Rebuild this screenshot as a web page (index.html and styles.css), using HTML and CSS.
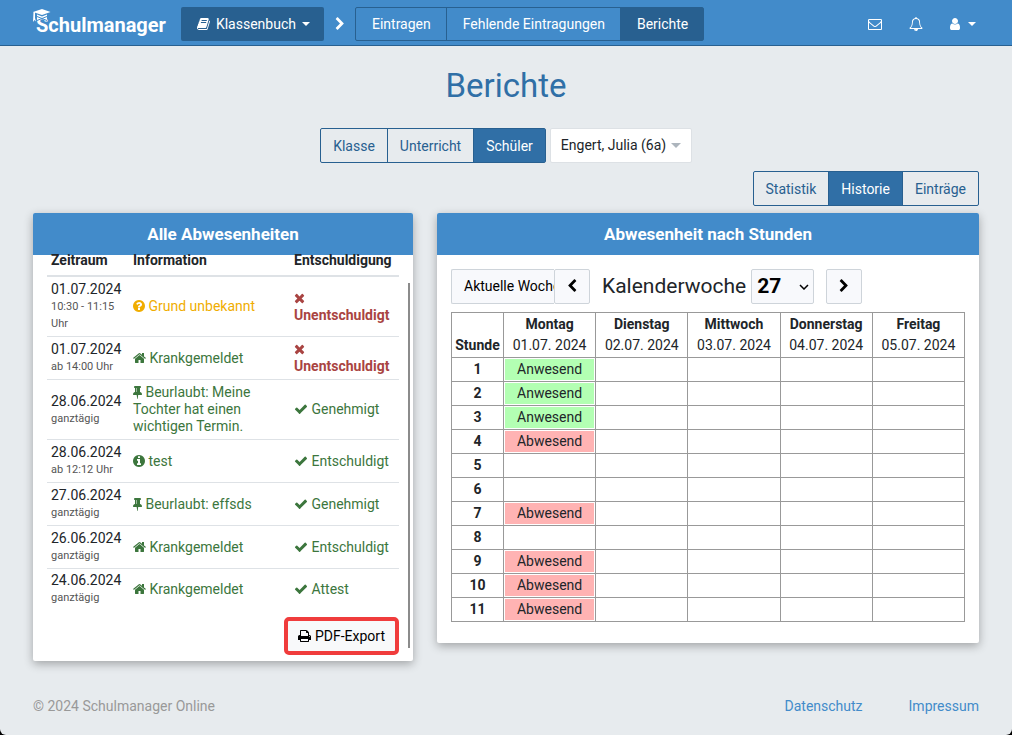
FILE: index.html
```html
<!DOCTYPE html>
<html lang="de">
<head>
<meta charset="utf-8">
<meta name="viewport" content="width=device-width, initial-scale=1">
<title>Schulmanager – Berichte</title>
<link rel="stylesheet" href="styles.css">
</head>
<body>
<svg class="sprite" aria-hidden="true">
  <symbol id="i-times" viewBox="192 0 1408 1792"><path d="M1490 1322q0 40-28 68l-136 136q-28 28-68 28t-68-28l-294-294-294 294q-28 28-68 28t-68-28l-136-136q-28-28-28-68t28-68l294-294-294-294q-28-28-28-68t28-68l136-136q28-28 68-28t68 28l294 294 294-294q28-28 68-28t68 28l136 136q28 28 28 68t-28 68l-294 294 294 294q28 28 28 68z"/></symbol>
  <symbol id="i-check" viewBox="0 0 1792 1792"><path d="M1671 566q0 40-28 68l-724 724-136 136q-28 28-68 28t-68-28l-136-136-362-362q-28-28-28-68t28-68l136-136q28-28 68-28t68 28l294 295 656-657q28-28 68-28t68 28l136 136q28 28 28 68z"/></symbol>
  <symbol id="i-home" viewBox="64 0 1664 1792"><path d="M1472 992v480q0 26-19 45t-45 19h-384v-384h-256v384h-384q-26 0-45-19t-19-45v-480q0-1 .5-3t.5-3l575-474 575 474q1 2 1 6zm223-69l-62 74q-8 9-21 11h-3q-13 0-21-7l-692-577-692 577q-12 8-24 7-13-2-21-11l-62-74q-8-10-7-23.5t11-21.5l719-599q32-26 76-26t76 26l244 204v-195q0-14 9-23t23-9h192q14 0 23 9t9 23v408l219 182q10 8 11 21.5t-7 23.5z"/></symbol>
  <symbol id="i-question" viewBox="128 0 1536 1792"><path d="M1024 1376v-192q0-14-9-23t-23-9h-192q-14 0-23 9t-9 23v192q0 14 9 23t23 9h192q14 0 23-9t9-23zm256-672q0-88-55.500-163t-138.500-116-170-41q-243 0-371 213-15 24 8 42l132 100q7 6 19 6 16 0 25-12 53-68 86-92 34-24 86-24 48 0 85.500 26t37.500 59q0 38-20 61t-68 45q-63 28-115.500 86.500t-52.500 125.500v36q0 14 9 23t23 9h192q14 0 23-9t9-23q0-19 21.500-49.500t54.500-49.500q32-18 49-28.500t46-35 44.500-48 28-60.500 12.500-81zm384 192q0 209-103 385.500t-279.500 279.500-385.500 103-385.500-103-279.500-279.500-103-385.500 103-385.500 279.500-279.500 385.500-103 385.500 103 279.500 279.500 103 385.500z"/></symbol>
  <symbol id="i-info" viewBox="128 0 1536 1792"><path d="M1152 1376v-160q0-14-9-23t-23-9h-96v-512q0-14-9-23t-23-9h-320q-14 0-23 9t-9 23v160q0 14 9 23t23 9h96v320h-96q-14 0-23 9t-9 23v160q0 14 9 23t23 9h448q14 0 23-9t9-23zm-128-896v-160q0-14-9-23t-23-9h-192q-14 0-23 9t-9 23v160q0 14 9 23t23 9h192q14 0 23-9t9-23zm640 416q0 209-103 385.500t-279.500 279.500-385.500 103-385.500-103-279.500-279.500-103-385.500 103-385.500 279.500-279.500 385.500-103 385.500 103 279.500 279.500 103 385.500z"/></symbol>
  <symbol id="i-pin" viewBox="320 0 1152 1792"><path d="M800 864v-448q0-14-9-23t-23-9-23 9-9 23v448q0 14 9 23t23 9 23-9 9-23zm672 352q0 26-19 45t-45 19h-429l-51 483q-2 12-10.500 20.500t-20.500 8.500h-1q-27 0-32-27l-76-485h-404q-26 0-45-19t-19-45q0-123 78.500-221.500t177.500-98.500v-512q-52 0-90-38t-38-90 38-90 90-38h640q52 0 90 38t38 90-38 90-90 38v512q99 0 177.500 98.500t78.500 221.500z"/></symbol>
  <symbol id="i-print" viewBox="64 0 1664 1792"><path d="M448 1536h896v-256h-896v256zm0-640h896v-384h-160q-40 0-68-28t-28-68v-160h-640v640zm1152 64q0-26-19-45t-45-19-45 19-19 45 19 45 45 19 45-19 19-45zm128 0v416q0 13-9.500 22.500t-22.500 9.500h-224v160q0 40-28 68t-68 28h-960q-40 0-68-28t-28-68v-160h-224q-13 0-22.500-9.500t-9.500-22.500v-416q0-79 56.500-135.500t135.500-56.500h64v-544q0-40 28-68t68-28h672q40 0 88 20t76 48l152 152q28 28 48 76t20 88v256h64q79 0 135.500 56.500t56.500 135.500z"/></symbol>
  <symbol id="i-book" viewBox="64 0 1664 1792"><path d="M1703 478q40 57 18 129l-275 906q-19 64-76.500 107.500t-122.500 43.500h-923q-77 0-148.500-53.500t-99.500-131.500q-24-67-2-127 0-4 3-27t4-37q1-8-3-21.500t-3-19.500q2-11 8-21t16.500-23.500 16.500-23.500q23-38 45-91.500t30-91.500q3-10 .5-30t-.5-28q3-11 17-28t17-23q21-36 42-92t25-90q1-9-2.500-32t.5-28q4-13 22-30.500t22-22.500q19-26 42.500-84.500t27.500-96.500q1-8-3-25.500t-2-26.500q2-8 9-18t18-23 17-21q8-12 16.500-30.500t15-35 16-36 19.500-32 26.500-23.500 36-11.500 47.500 5.500l-1 3q38-9 51-9h761q74 0 114 56t18 130l-274 906q-36 119-71.500 153.500t-128.500 34.500h-869q-27 0-38 15-11 16-1 43 24 70 144 70h923q29 0 56-15.500t35-41.500l300-987q7-22 5-57 38 15 59 43zm-1064 2q-4 13 2 22.500t20 9.500h608q13 0 25.500-9.500t16.500-22.500l21-64q4-13-2-22.500t-20-9.500h-608q-13 0-25.500 9.500t-16.500 22.500zm-83 256q-4 13 2 22.500t20 9.500h608q13 0 25.500-9.500t16.500-22.500l21-64q4-13-2-22.500t-20-9.500h-608q-13 0-25.500 9.500t-16.500 22.500z"/></symbol>
  <symbol id="i-mail" viewBox="0 0 1792 1792"><path d="M1664 1504v-768q-32 36-69 66-268 206-426 338-51 43-83 67t-86.500 48.500-102.500 24.500h-2q-48 0-102.500-24.500t-86.500-48.500-83-67q-158-132-426-338-37-30-69-66v768q0 13 9.500 22.500t22.500 9.500h1472q13 0 22.500-9.500t9.500-22.500zm0-1051v-24.500l-.5-13-3-12.500-5.500-9-9-7.500-14-2.500h-1472q-13 0-22.500 9.500t-9.500 22.500q0 168 147 284 193 152 401 317 6 5 35 29.500t46 37.500 44.500 31.500 50.500 27.500 43 9h2q20 0 43-9t50.500-27.500 44.500-31.500 46-37.500 35-29.500q208-165 401-317 54-43 100.500-115.500t46.500-131.500zm128-37v1088q0 66-47 113t-113 47h-1472q-66 0-113-47t-47-113v-1088q0-66 47-113t113-47h1472q66 0 113 47t47 113z"/></symbol>
  <symbol id="i-bell" viewBox="0 0 1792 1792"><path d="M912 1696q0-16-16-16-59 0-101.500-42.500t-42.500-101.500q0-16-16-16t-16 16q0 73 51.500 124.500t124.500 51.500q16 0 16-16zm-666-288h1300q-266-300-266-832 0-51-24-105t-69-103-121.500-80.500-169.500-31.500-169.500 31.500-121.500 80.500-69 103-24 105q0 532-266 832zm1482 0q0 52-38 90t-90 38h-448q0 106-75 181t-181 75-181-75-75-181h-448q-52 0-90-38t-38-90q50-42 91-88t85-119.500 74.500-158.500 50-206 19.500-260q0-152 117-282.500t307-158.500q-8-19-8-39 0-40 28-68t68-28 68 28 28 68q0 20-8 39 190 28 307 158.500t117 282.500q0 139 19.500 260t50 206 74.500 158.500 85 119.500 91 88z"/></symbol>
  <symbol id="i-user" viewBox="256 0 1280 1792"><path d="M1536 1399q0 109-62.500 187t-150.500 78h-854q-88 0-150.500-78t-62.500-187q0-85 8.500-160.500t31.500-152 58.500-131 94-89 134.500-34.500q131 128 313 128t313-128q76 0 134.500 34.500t94 89 58.500 131 31.500 152 8.500 160.500zm-256-887q0 159-112.500 271.500t-271.500 112.500-271.500-112.500-112.500-271.500 112.500-271.500 271.500-112.500 271.500 112.500 112.500 271.500z"/></symbol>
  <symbol id="i-next" viewBox="256 0 1280 1792"><path d="M1363 877l-742 742q-19 19-45 19t-45-19l-166-166q-19-19-19-45t19-45l531-531-531-531q-19-19-19-45t19-45l166-166q19-19 45-19t45 19l742 742q19 19 19 45t-19 45z"/></symbol>
  <symbol id="i-prev" viewBox="256 0 1280 1792"><path transform="translate(1792 0) scale(-1 1)" d="M1363 877l-742 742q-19 19-45 19t-45-19l-166-166q-19-19-19-45t19-45l531-531-531-531q-19-19-19-45t19-45l166-166q19-19 45-19t45 19l742 742q19 19 19 45t-19 45z"/></symbol>
</svg>

<header class="topbar">
  <a class="logo" href="#">Schulmanager
    <svg class="logo-cap" viewBox="0 0 18 16" aria-hidden="true">
      <path class="cap-gap" d="M2 5H16V9L14 10H4L2 11Z"/>
      <path d="M0 3L9 0L17.500 3L9 6Z"/>
      <path d="M4 5.500L9 7.500L14 5.500V11.500L9 9.500L4 11.500Z"/>
      <path class="cap-line" d="M4 7.500L14 11.500M14 7.500L4 11.500"/>
      <path d="M.5 3H2V9L3 12.500L1.500 11L0 13Z"/>
    </svg>
  </a>
  <button class="module" type="button"><svg class="icon w13"><use href="#i-book"/></svg>Klassenbuch<span class="caret"></span></button>
  <svg class="icon w10 crumb" aria-hidden="true"><use href="#i-next"/></svg>
  <nav class="group nav-group">
    <a href="#">Eintragen</a><a href="#">Fehlende Eintragungen</a><a class="active" href="#" aria-current="page">Berichte</a>
  </nav>
  <div class="tools">
    <a href="#" aria-label="Nachrichten"><svg class="icon w14"><use href="#i-mail"/></svg></a>
    <a href="#" aria-label="Benachrichtigungen"><svg class="icon w14"><use href="#i-bell"/></svg></a>
    <a href="#" aria-label="Benutzer"><svg class="icon w10"><use href="#i-user"/></svg><span class="caret"></span></a>
  </div>
</header>

<main class="page">
  <h1>Berichte</h1>
  <div class="filters">
    <div class="group tabs">
      <a href="#">Klasse</a><a href="#">Unterricht</a><a class="active" href="#">Schüler</a>
    </div>
    <label class="student">
      <select aria-label="Schüler auswählen"><option>Engert, Julia (6a)</option></select>
      <span class="caret student-caret"></span>
    </label>
  </div>
  <div class="views">
    <div class="group tabs">
      <a href="#">Statistik</a><a class="active" href="#">Historie</a><a href="#">Einträge</a>
    </div>
  </div>

  <div class="panels">
    <section class="panel">
      <h2>Alle Abwesenheiten</h2>
      <div class="absences">
        <table class="list">
          <colgroup><col class="c-time"><col><col class="c-state"></colgroup>
          <thead><tr><th>Zeitraum</th><th>Information</th><th>Entschuldigung</th></tr></thead>
          <tbody>
            <tr><td>01.07.2024<small>10:30 - 11:15 Uhr</small></td><td class="warn"><svg class="icon w12"><use href="#i-question"/></svg> Grund unbekannt</td><td class="bad"><svg class="icon w11"><use href="#i-times"/></svg> Unentschuldigt</td></tr>
            <tr><td>01.07.2024<small>ab 14:00 Uhr</small></td><td class="good"><svg class="icon w13"><use href="#i-home"/></svg> Krankgemeldet</td><td class="bad"><svg class="icon w11"><use href="#i-times"/></svg> Unentschuldigt</td></tr>
            <tr><td>28.06.2024<small>ganztägig</small></td><td class="good"><svg class="icon w9"><use href="#i-pin"/></svg> Beurlaubt: Meine Tochter hat einen wichtigen Termin.</td><td class="good"><svg class="icon w14"><use href="#i-check"/></svg> Genehmigt</td></tr>
            <tr><td>28.06.2024<small>ab 12:12 Uhr</small></td><td class="good"><svg class="icon w12"><use href="#i-info"/></svg> test</td><td class="good"><svg class="icon w14"><use href="#i-check"/></svg> Entschuldigt</td></tr>
            <tr><td>27.06.2024<small>ganztägig</small></td><td class="good"><svg class="icon w9"><use href="#i-pin"/></svg> Beurlaubt: effsds</td><td class="good"><svg class="icon w14"><use href="#i-check"/></svg> Genehmigt</td></tr>
            <tr><td>26.06.2024<small>ganztägig</small></td><td class="good"><svg class="icon w13"><use href="#i-home"/></svg> Krankgemeldet</td><td class="good"><svg class="icon w14"><use href="#i-check"/></svg> Entschuldigt</td></tr>
            <tr><td>24.06.2024<small>ganztägig</small></td><td class="good"><svg class="icon w13"><use href="#i-home"/></svg> Krankgemeldet</td><td class="good"><svg class="icon w14"><use href="#i-check"/></svg> Attest</td></tr>
          </tbody>
        </table>
        <div class="export"><button type="button"><svg class="icon w13"><use href="#i-print"/></svg> PDF-Export</button></div>
        <span class="scroll-thumb"></span>
      </div>
    </section>

    <section class="panel">
      <h2>Abwesenheit nach Stunden</h2>
      <div class="week">
        <div class="week-bar">
          <div class="week-nav">
            <button class="btn current" type="button">Aktuelle Woche</button><button class="btn step" type="button" aria-label="Vorherige Woche"><svg class="icon w10"><use href="#i-prev"/></svg></button>
          </div>
          <label class="week-label" for="kw">Kalenderwoche</label>
          <span class="week-pick">
            <select id="kw"><option>27</option></select>
            <svg viewBox="0 0 10 6" aria-hidden="true"><path d="M1 1L5 5L9 1"/></svg>
          </span>
          <button class="btn step" type="button" aria-label="Nächste Woche"><svg class="icon w10"><use href="#i-next"/></svg></button>
        </div>
        <table class="hours">
          <colgroup><col class="c-hour"><col><col><col><col><col></colgroup>
          <thead><tr><th>Stunde</th><th>Montag<span>01.07. 2024</span></th><th>Dienstag<span>02.07. 2024</span></th><th>Mittwoch<span>03.07. 2024</span></th><th>Donnerstag<span>04.07. 2024</span></th><th>Freitag<span>05.07. 2024</span></th></tr></thead>
          <tbody>
            <tr><th>1</th><td><span class="present">Anwesend</span></td><td></td><td></td><td></td><td></td></tr>
            <tr><th>2</th><td><span class="present">Anwesend</span></td><td></td><td></td><td></td><td></td></tr>
            <tr><th>3</th><td><span class="present">Anwesend</span></td><td></td><td></td><td></td><td></td></tr>
            <tr><th>4</th><td><span class="absent">Abwesend</span></td><td></td><td></td><td></td><td></td></tr>
            <tr><th>5</th><td></td><td></td><td></td><td></td><td></td></tr>
            <tr><th>6</th><td></td><td></td><td></td><td></td><td></td></tr>
            <tr><th>7</th><td><span class="absent">Abwesend</span></td><td></td><td></td><td></td><td></td></tr>
            <tr><th>8</th><td></td><td></td><td></td><td></td><td></td></tr>
            <tr><th>9</th><td><span class="absent">Abwesend</span></td><td></td><td></td><td></td><td></td></tr>
            <tr><th>10</th><td><span class="absent">Abwesend</span></td><td></td><td></td><td></td><td></td></tr>
            <tr><th>11</th><td><span class="absent">Abwesend</span></td><td></td><td></td><td></td><td></td></tr>
          </tbody>
        </table>
      </div>
    </section>
  </div>
</main>

<footer class="footer">
  <span>© 2024 Schulmanager Online</span>
  <nav><a href="#">Datenschutz</a><a href="#">Impressum</a></nav>
</footer>
</body>
</html>
```
FILE: styles.css
```css
* { box-sizing: border-box; }

html { background: #000; }

body {
  margin: 0;
  min-height: 100vh;
  background: #e7ebee;
  border-radius: 0 0 6px 6px;
  color: #212529;
  font: 14px/21px Roboto, "Liberation Sans", sans-serif;
}

a { color: #428bca; text-decoration: none; }
button, select { font: inherit; cursor: pointer; }
.sprite { display: none; }

.icon { height: 14px; fill: currentColor; vertical-align: -2px; overflow: visible; }
.w9 { width: 9px; }
.w10 { width: 10px; }
.w11 { width: 11px; }
.w12 { width: 12px; }
.w13 { width: 13px; }
.w14 { width: 14px; }

.caret {
  display: inline-block;
  border: 4px solid transparent;
  border-top-color: currentColor;
  border-bottom: 0;
}

/* top bar */
.topbar {
  display: flex;
  align-items: center;
  padding: 7px 33px 4px;
  background: #428bca;
  border-bottom: 1px solid #286090;
  color: #fff;
}
.logo {
  position: relative;
  padding: 2px 0 0 3px;
  margin-right: 15px;
  color: #fff;
  font-size: 20px;
  font-weight: 700;
}
.logo-cap { position: absolute; left: 0; top: -4px; width: 18px; height: 16px; fill: #fff; }
.logo-cap .cap-gap { fill: #428bca; }
.cap-line { stroke: #428bca; stroke-width: 1; }
.module {
  display: flex;
  align-items: center;
  gap: 6px;
  height: 34px;
  padding: 0 14px 0 16px;
  border: 0;
  border-radius: 2px;
  background: #286090;
  color: #fff;
}
.crumb { margin: 0 10px 0 11px; }

.group { display: flex; border: 1px solid #286090; border-radius: 2px; }
.group a + a { border-left: 1px solid #286090; }
.nav-group a { padding: 6px 15px 5px 16px; line-height: 21px; color: #fff; }
.nav-group .active { background: #286090; }
.tools { display: flex; align-items: center; gap: 27px; margin-left: auto; padding-right: 3px; }
.tools a { display: flex; align-items: center; gap: 8px; color: #fff; }

/* page heading and switches */
.page { padding: 19px 33px 0; }
h1 { margin: 0 0 21px; color: #306fa6; font-size: 33px; font-weight: 400; line-height: 42px; text-align: center; }
.filters { display: flex; justify-content: center; gap: 4px; margin-bottom: 8px; }
.views { display: flex; justify-content: flex-end; margin-bottom: 7px; }
.tabs a { padding: 7px 12px 5px; color: #286090; }
.tabs .active { background: #306fa6; color: #fff; }
.student {
  display: flex;
  align-items: center;
  padding: 0 10px;
  border: 1px solid #dde1e5;
  border-radius: 2px;
  background: #fff;
}
.student select { appearance: none; padding: 0; border: 0; background: none; color: #212529; }
.student-caret { margin-left: 4px; border-width: 5px; border-bottom: 0; color: #adb5bd; }

/* panels */
.panels { display: grid; grid-template-columns: 380fr 542fr; align-items: start; gap: 24px; }
.panel { border-radius: 2px; background: #fff; box-shadow: 0 3px 10px rgba(0, 0, 0, .3); }
h2 {
  margin: 0;
  padding: 11px 14px 10px;
  border-radius: 2px 2px 0 0;
  background: #428bca;
  color: #fff;
  font-size: 17px;
  font-weight: 700;
  line-height: 21px;
  text-align: center;
}

.absences { position: relative; padding: 0 14px 6px; }
.list { width: 100%; border-collapse: collapse; table-layout: fixed; line-height: 17px; }
.c-time { width: 82px; }
.c-state { width: 109px; }
.list th { padding: 0 4px 9px; border-bottom: 2px solid #dee2e6; line-height: 11px; text-align: left; }
.list td { padding: 4px; border-bottom: 1px solid #dee2e6; vertical-align: middle; }
.list tr:last-child td { padding-top: 3px; border-bottom: 0; }
.list small { display: block; color: #555; font-size: 11px; }
.warn { color: #f0ad00; }
.good { color: #3c763d; }
.bad { color: #a94442; font-weight: 700; }

.export { display: flex; justify-content: flex-end; margin-top: 7px; }
.export button {
  height: 38px;
  padding: 0 10px;
  border: 4px solid #f03c3c;
  border-radius: 5px;
  background: #f8f9fa;
  color: #000;
}
.scroll-thumb { position: absolute; top: 28px; right: 3px; bottom: 13px; width: 2px; background: #8b8b8b; }

.week { padding: 14px 14px 21px; }
.week-bar { display: flex; align-items: center; margin-bottom: 8px; }
.week-nav { display: flex; width: 139px; margin-right: 12px; }
.btn {
  height: 35px;
  border: 1px solid #ced4da;
  border-radius: 2px;
  background: #f8f9fc;
  color: #000;
}
.current { flex: 1; min-width: 0; overflow: hidden; padding: 0 0 0 12px; border-radius: 2px 0 0 2px; border-right: 0; text-align: left; white-space: nowrap; }
.step { flex: none; width: 36px; padding: 0; }
.week-label { font-size: 21px; }
.week-pick { position: relative; margin: 0 12px 0 5px; }
.week-pick select {
  display: block;
  appearance: none;
  width: 63px;
  height: 35px;
  padding: 0 5px;
  border: 1px solid #ced4da;
  border-radius: 2px;
  background: #f8f9fc;
  color: #000;
  font-size: 21px;
  font-weight: 700;
}
.week-pick svg { position: absolute; right: 5px; top: 15px; width: 10px; height: 6px; fill: none; stroke: #000; stroke-width: 1.500; pointer-events: none; }

.hours { width: 100%; border-collapse: collapse; table-layout: fixed; text-align: center; }
.c-hour { width: 52px; }
.hours th, .hours td { height: 24px; padding: 1px; border: 1px solid #999; vertical-align: bottom; }
.hours span { display: block; font-weight: 400; }
.present { background: #b3ffb3; }
.absent { background: #ffb3b3; }

.footer { display: flex; justify-content: space-between; padding: 35px 33px 18px; color: #999; }
.footer nav { display: flex; gap: 46px; }
```
